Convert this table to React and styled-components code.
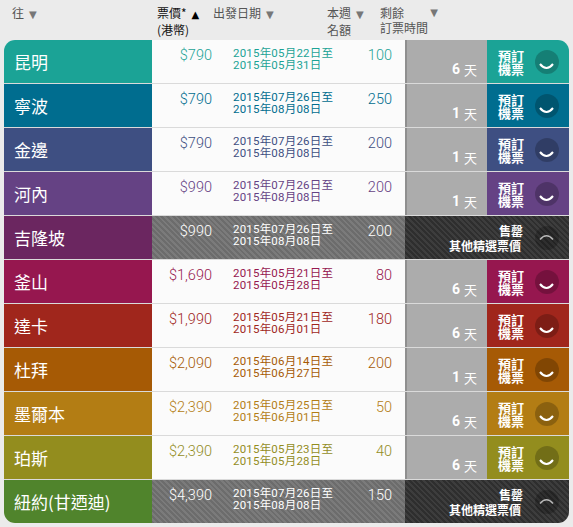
import React from 'react';
import styled, { createGlobalStyle, css } from 'styled-components';

const flights = [
  { city: '昆明', color: '#1ba396', price: '$790', from: '2015年05月22日至', to: '2015年05月31日', quota: 100, days: 6 },
  { city: '寧波', color: '#006d8f', price: '$790', from: '2015年07月26日至', to: '2015年08月08日', quota: 250, days: 1 },
  { city: '金邊', color: '#3e4f82', price: '$790', from: '2015年07月26日至', to: '2015年08月08日', quota: 200, days: 1 },
  { city: '河內', color: '#654284', price: '$990', from: '2015年07月26日至', to: '2015年08月08日', quota: 200, days: 1 },
  { city: '吉隆坡', color: '#6b2660', price: '$990', from: '2015年07月26日至', to: '2015年08月08日', quota: 200, soldOut: true },
  { city: '釜山', color: '#96174f', price: '$1,690', from: '2015年05月21日至', to: '2015年05月28日', quota: 80, days: 6 },
  { city: '達卡', color: '#a0261c', price: '$1,990', from: '2015年05月21日至', to: '2015年06月01日', quota: 180, days: 6 },
  { city: '杜拜', color: '#a65a05', price: '$2,090', from: '2015年06月14日至', to: '2015年06月27日', quota: 200, days: 1 },
  { city: '墨爾本', color: '#b37d14', price: '$2,390', from: '2015年05月25日至', to: '2015年06月01日', quota: 50, days: 6 },
  { city: '珀斯', color: '#938d1e', price: '$2,390', from: '2015年05月23日至', to: '2015年05月28日', quota: 40, days: 6 },
  { city: '紐約(甘迺迪)', color: '#50842c', price: '$4,390', from: '2015年07月26日至', to: '2015年08月08日', quota: 150, soldOut: true },
];

const Smile = ({ up }) => (
  <svg width="24" height="24" viewBox="0 0 24 24">
    <circle cx="12" cy="12" r="12" fill="rgba(0,0,0,0.22)" />
    {up ? (
      <path d="M5 13.5 Q11.5 6 18 13.5" stroke="#b5b5b5" strokeWidth="1.6" fill="none" />
    ) : (
      <path d="M5 14 Q11.5 22 18 14" stroke="#fff" strokeWidth="2" fill="none" />
    )}
  </svg>
);

const App = () => {
  return (
    <>
      <GlobalStyle />
      <Page>
        <Header>
          <HeadCell>往<Arrow>▼</Arrow></HeadCell>
          <HeadCell $active>票價*<Arrow $active>▲</Arrow><br />(港幣)</HeadCell>
          <HeadCell>出發日期<Arrow>▼</Arrow></HeadCell>
          <HeadCell>本週<Arrow>▼</Arrow><br />名額</HeadCell>
          <HeadCell>
            <SplitHead>剩餘<Arrow>▼</Arrow></SplitHead>
            訂票時間
          </HeadCell>
        </Header>
        <Table>
          {flights.map((f) => (
            <Row key={f.city}>
              <City $color={f.color}>{f.city}</City>
              <Info $soldOut={f.soldOut} $color={f.color}>
                <Price>{f.price}</Price>
                <Dates>
                  <div>{f.from}</div>
                  <div>{f.to}</div>
                </Dates>
                <Quota>{f.quota}</Quota>
              </Info>
              {f.soldOut ? (
                <SoldOut>
                  <SoldText>
                    <div>售罄</div>
                    <SoldSub>其他精選票價</SoldSub>
                  </SoldText>
                  <Smile up />
                </SoldOut>
              ) : (
                <>
                  <Remaining>
                    <Days>{f.days}</Days>天
                  </Remaining>
                  <Book $color={f.color}>
                    <BookText>預訂<br />機票</BookText>
                    <Smile />
                  </Book>
                </>
              )}
            </Row>
          ))}
        </Table>
      </Page>
    </>
  );
};

const GlobalStyle = createGlobalStyle`
  body {
    margin: 0;
    background: #ebebeb;
    font-family: Roboto, "Noto Sans CJK TC", sans-serif;
  }
`;

const Page = styled.div`
  width: 573px;
  padding: 0 4px;
  box-sizing: border-box;
`;

const Header = styled.div`
  display: grid;
  grid-template-columns: 145px 56px 114px 53px auto;
  padding: 5px 0 0 8px;
  height: 40px;
  box-sizing: border-box;
`;

const HeadCell = styled.div`
  font-family: "Noto Sans CJK TC", sans-serif;
  font-size: 12px;
  line-height: 15px;
  color: ${p => (p.$active ? '#111' : '#555')};
`;

const SplitHead = styled.div`
  display: flex;
  justify-content: space-between;
  width: 58px;
`;

const Arrow = styled.span`
  font-family: "DejaVu Sans", sans-serif;
  font-size: 10px;
  margin-left: 5px;
  color: ${p => (p.$active ? '#000' : '#777')};
`;

const Table = styled.div`
  border-radius: 11px;
  overflow: hidden;
  background: #fbfbfb;
`;

const Row = styled.div`
  display: flex;
  height: 44px;
  box-sizing: border-box;
  border-bottom: 1px solid #dadada;
  &:last-child {
    border-bottom: none;
    height: 43px;
  }
`;

const City = styled.div`
  width: 148px;
  flex-shrink: 0;
  background: ${p => p.$color};
  color: #fff;
  font-family: "Noto Sans CJK TC", sans-serif;
  font-size: 17px;
  display: flex;
  align-items: center;
  padding-left: 10px;
  box-sizing: border-box;
`;

const stripes = (a, b) => css`
  background: repeating-linear-gradient(45deg, ${a} 0 2px, ${b} 2px 4px);
`;

const Info = styled.div`
  display: grid;
  grid-template-columns: 81px 125px 47px;
  width: 253px;
  flex-shrink: 0;
  color: ${p => (p.$soldOut ? '#fff' : p.$color)};
  background: #fbfbfb;
  ${p => p.$soldOut && stripes('#6c6c6c', '#7b7b7b')}
`;

const Price = styled.div`
  text-align: right;
  padding: 8px 21px 0 0;
  font-size: 14.5px;
  font-weight: 300;
  line-height: 16px;
`;

const Dates = styled.div`
  padding-top: 7px;
  font-size: 11.5px;
  line-height: 12px;
  letter-spacing: 0.2px;
  white-space: nowrap;
`;

const Quota = styled.div`
  text-align: right;
  padding: 8px 13px 0 0;
  font-size: 14.5px;
  font-weight: 300;
  line-height: 16px;
`;

const Remaining = styled.div`
  width: 82px;
  flex-shrink: 0;
  background: #acacac;
  box-shadow: inset 2px 0 0 #8f8f8f;
  color: #fff;
  font-family: "Noto Sans CJK TC", sans-serif;
  font-size: 13px;
  display: flex;
  align-items: flex-end;
  justify-content: flex-end;
  padding: 0 10px 6px 0;
  box-sizing: border-box;
  line-height: 15px;
`;

const Days = styled.span`
  font-family: Roboto, sans-serif;
  font-weight: bold;
  font-size: 14px;
  margin-right: 4px;
`;

const Book = styled.div`
  width: 82px;
  flex-shrink: 0;
  background: ${p => p.$color};
  display: flex;
  align-items: center;
  justify-content: space-between;
  padding: 0 10px 0 11px;
  box-sizing: border-box;
`;

const BookText = styled.div`
  color: #fff;
  font-family: "Noto Sans CJK TC", sans-serif;
  font-weight: bold;
  font-size: 13px;
  line-height: 13px;
  margin-top: 1px;
`;

const SoldOut = styled.div`
  width: 164px;
  flex-shrink: 0;
  ${stripes('#2e2e2e', '#3d3d3d')}
  display: flex;
  align-items: center;
  justify-content: flex-end;
  gap: 12px;
  padding-right: 10px;
  box-sizing: border-box;
`;

const SoldText = styled.div`
  color: #fff;
  font-family: "Noto Sans CJK TC", sans-serif;
  font-weight: bold;
  font-size: 12px;
  line-height: 15px;
  text-align: right;
`;

const SoldSub = styled.div`
  margin-right: 2px;
`;

export default App;
